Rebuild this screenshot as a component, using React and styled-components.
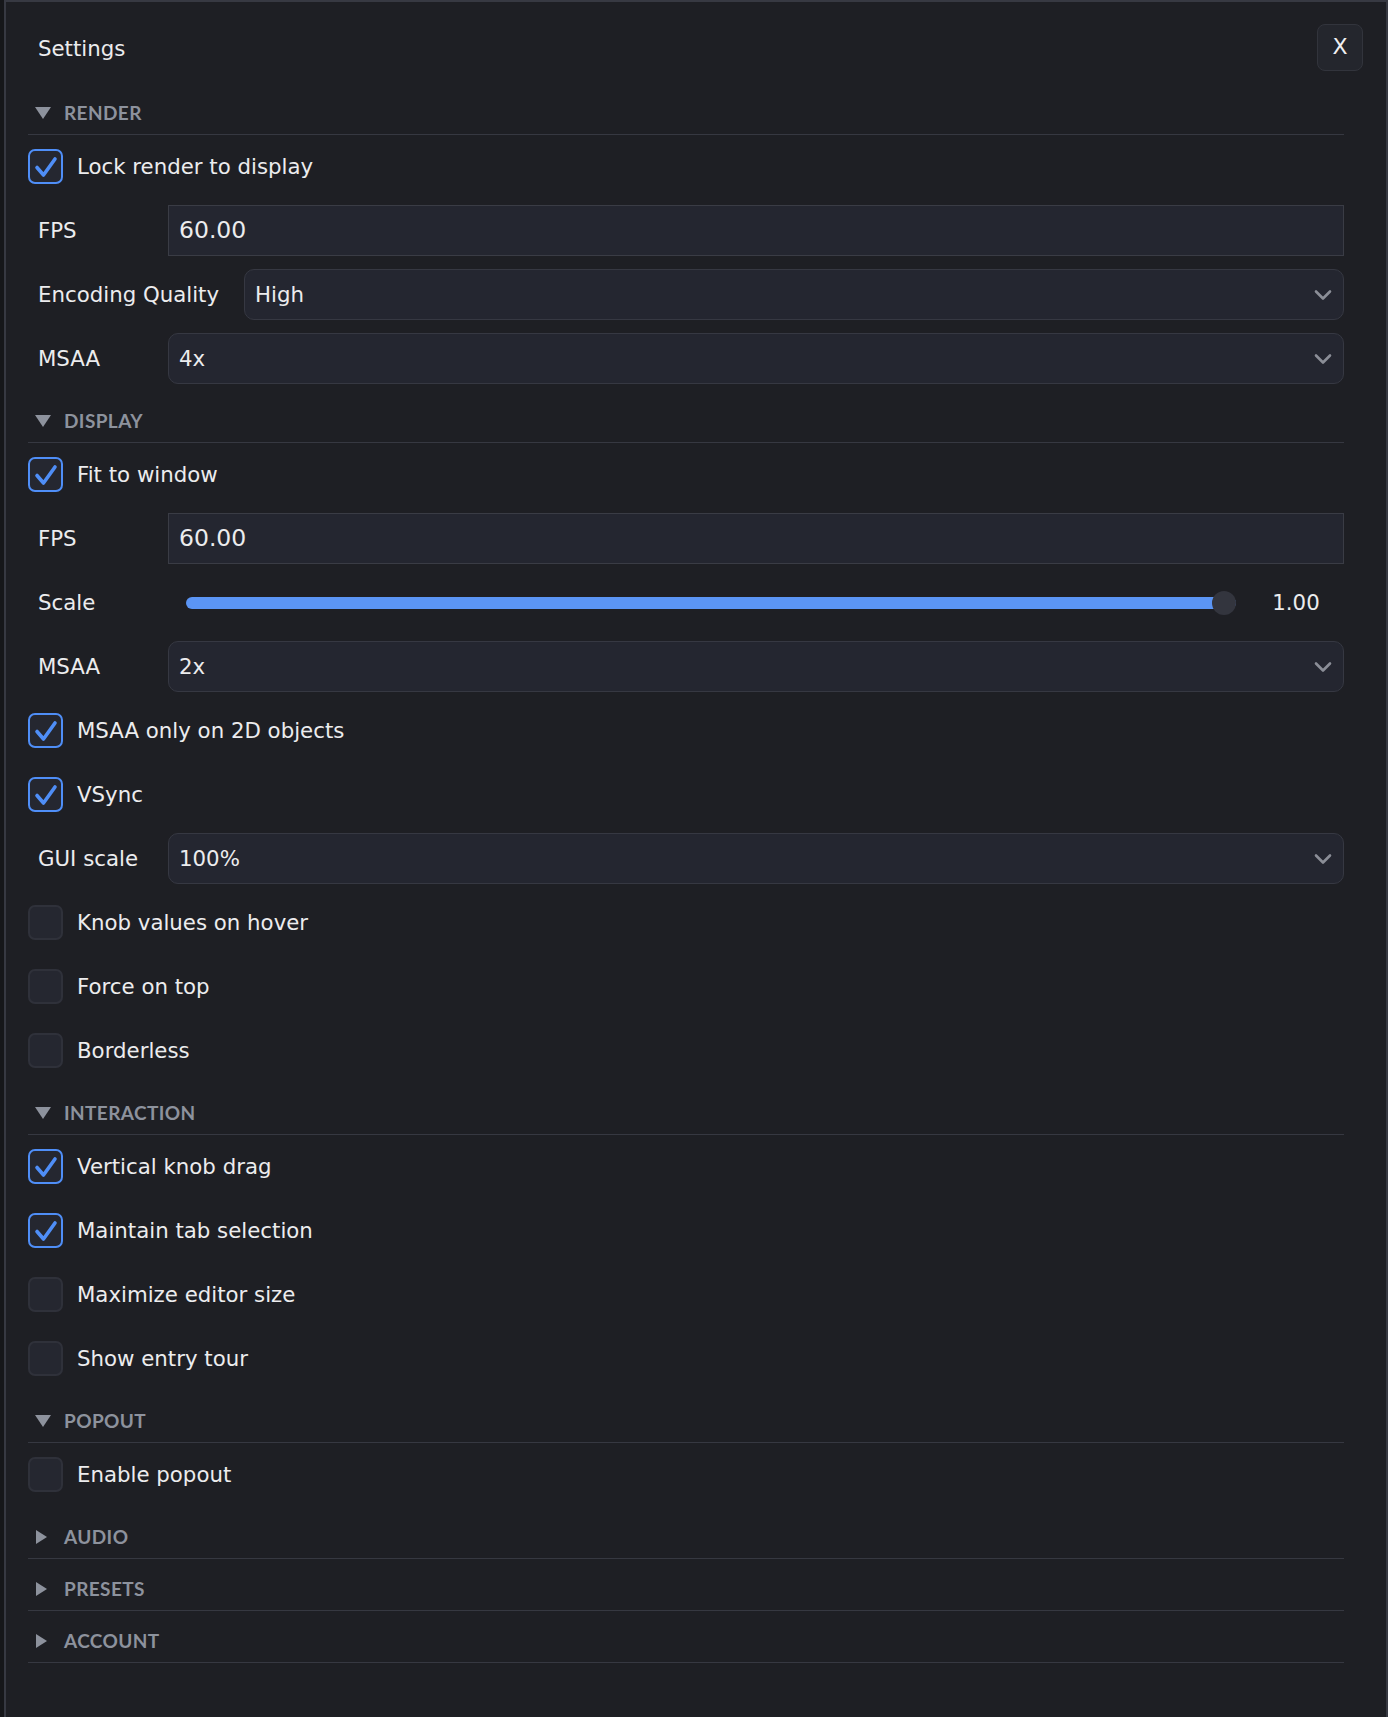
import React from 'react';
import styled, { createGlobalStyle } from 'styled-components';

const GlobalStyle = createGlobalStyle`
  html, body {
    margin: 0;
    padding: 0;
    background: #16171a;
  }
  * {
    box-sizing: border-box;
  }
`;

const Panel = styled.div`
  margin-left: 4px;
  min-height: 1717px;
  background: #1e1f24;
  border: 2px solid #373942;
  border-bottom: none;
  font-family: 'DejaVu Sans', Verdana, sans-serif;
  color: #ececee;
  padding: 22px 23px 0 22px;
`;

const TopBar = styled.div`
  display: flex;
  align-items: center;
  justify-content: space-between;
  margin-bottom: 12px;
`;

const Title = styled.h1`
  margin: 0;
  padding: 2px 0 0 10px;
  font-size: 21.3px;
  font-weight: 400;
  line-height: 28px;
`;

const CloseButton = styled.button`
  width: 46px;
  height: 47px;
  border-radius: 8px;
  border: 1.5px solid #32343c;
  background: #24262d;
  color: #f0f0f2;
  font-family: 'DejaVu Sans', Verdana, sans-serif;
  font-size: 22px;
  line-height: 1;
  display: flex;
  align-items: center;
  justify-content: center;
  padding: 0 0 2px;
`;

const Content = styled.div`
  margin-right: 19px;
`;

const SectionHeader = styled.div`
  display: flex;
  align-items: center;
  gap: 13px;
  padding: 16px 0 7px 7px;
  border-bottom: 1.5px solid #363841;
  font-family: Lato, 'DejaVu Sans', sans-serif;
  font-size: 19px;
  line-height: 28px;
  font-weight: 700;
  letter-spacing: 0.4px;
  color: #8d929d;
`;

const Caret = styled.span`
  width: 16px;
  display: flex;
  align-items: center;
  svg {
    display: block;
  }
`;

const SectionBody = styled.div`
  display: flex;
  flex-direction: column;
  gap: 13px;
  padding: 6px 0 7px;
`;

const Row = styled.div`
  display: flex;
  align-items: center;
  gap: 15px;
  height: 51px;
`;

const Label = styled.span`
  min-width: 125px;
  padding: 0 10px;
  font-size: 21.3px;
  line-height: 28px;
  white-space: nowrap;
`;

const CheckRow = styled.label`
  display: flex;
  align-items: center;
  gap: 14px;
  height: 51px;
  font-size: 21.3px;
  line-height: 28px;
`;

const Box = styled.span`
  width: 35px;
  height: 35px;
  flex: none;
  border-radius: 7px;
  background: #252730;
  border: ${p => (p.checked ? '2.5px solid #4f8ef7' : '2px solid #2f313a')};
  display: flex;
  align-items: center;
  justify-content: center;
`;

const TextInput = styled.div`
  flex: 1;
  height: 51px;
  display: flex;
  align-items: center;
  padding: 0 10px 2px;
  background: #242630;
  border: 1.5px solid #3a3c45;
  font-size: 23.5px;
`;

const Select = styled.div`
  flex: 1;
  height: 51px;
  display: flex;
  align-items: center;
  justify-content: space-between;
  padding: 0 11px 0 10px;
  background: #242630;
  border: 1.5px solid #363842;
  border-radius: 10px;
  font-size: 21.3px;
`;

const SliderWrap = styled.div`
  flex: 1;
  display: flex;
  align-items: center;
  gap: 12px;
  padding-left: 18px;
`;

const Track = styled.div`
  position: relative;
  flex: 1;
  height: 12px;
  border-radius: 6px;
  background: #5b95f5;
`;

const Thumb = styled.span`
  position: absolute;
  right: 0;
  top: 50%;
  width: 24px;
  height: 24px;
  margin-top: -12px;
  border-radius: 50%;
  background: #33353e;
`;

const SliderValue = styled.span`
  width: 96px;
  text-align: center;
  font-size: 21.3px;
`;

const Check = () => (
  <svg width="24" height="22" viewBox="0 0 24 22">
    <path d="M3 11.5 L9.5 19 L21 3" fill="none" stroke="#4f8ef7" strokeWidth="3.6" strokeLinecap="round" strokeLinejoin="round" />
  </svg>
);

const Chevron = () => (
  <svg width="18" height="12" viewBox="0 0 18 12">
    <path d="M2 2.5 L9 9.5 L16 2.5" fill="none" stroke="#8b8e97" strokeWidth="2.6" strokeLinecap="round" strokeLinejoin="round" />
  </svg>
);

const Triangle = ({ open }) =>
  open ? (
    <svg width="16" height="12" viewBox="0 0 16 12">
      <polygon points="0,0 16,0 8,12" fill="#8d929d" />
    </svg>
  ) : (
    <svg width="16" height="14" viewBox="0 0 16 14">
      <polygon points="1,0 12,7 1,14" fill="#8d929d" />
    </svg>
  );

const Checkbox = ({ checked, children }) => (
  <CheckRow>
    <Box checked={checked}>{checked && <Check />}</Box>
    {children}
  </CheckRow>
);

const Field = ({ label, value }) => (
  <Row>
    <Label>{label}</Label>
    <TextInput>{value}</TextInput>
  </Row>
);

const Dropdown = ({ label, value }) => (
  <Row>
    <Label>{label}</Label>
    <Select>
      <span>{value}</span>
      <Chevron />
    </Select>
  </Row>
);

const Slider = ({ label, value }) => (
  <Row>
    <Label>{label}</Label>
    <SliderWrap>
      <Track>
        <Thumb />
      </Track>
      <SliderValue>{value}</SliderValue>
    </SliderWrap>
  </Row>
);

const Section = ({ title, open, children }) => (
  <div>
    <SectionHeader>
      <Caret>
        <Triangle open={open} />
      </Caret>
      {title}
    </SectionHeader>
    {open && <SectionBody>{children}</SectionBody>}
  </div>
);

export default function App() {
  return (
    <>
      <GlobalStyle />
      <Panel>
        <TopBar>
          <Title>Settings</Title>
          <CloseButton>X</CloseButton>
        </TopBar>
        <Content>
          <Section title="RENDER" open>
            <Checkbox checked>Lock render to display</Checkbox>
            <Field label="FPS" value="60.00" />
            <Dropdown label="Encoding Quality" value="High" />
            <Dropdown label="MSAA" value="4x" />
          </Section>
          <Section title="DISPLAY" open>
            <Checkbox checked>Fit to window</Checkbox>
            <Field label="FPS" value="60.00" />
            <Slider label="Scale" value="1.00" />
            <Dropdown label="MSAA" value="2x" />
            <Checkbox checked>MSAA only on 2D objects</Checkbox>
            <Checkbox checked>VSync</Checkbox>
            <Dropdown label="GUI scale" value="100%" />
            <Checkbox>Knob values on hover</Checkbox>
            <Checkbox>Force on top</Checkbox>
            <Checkbox>Borderless</Checkbox>
          </Section>
          <Section title="INTERACTION" open>
            <Checkbox checked>Vertical knob drag</Checkbox>
            <Checkbox checked>Maintain tab selection</Checkbox>
            <Checkbox>Maximize editor size</Checkbox>
            <Checkbox>Show entry tour</Checkbox>
          </Section>
          <Section title="POPOUT" open>
            <Checkbox>Enable popout</Checkbox>
          </Section>
          <Section title="AUDIO" />
          <Section title="PRESETS" />
          <Section title="ACCOUNT" />
        </Content>
      </Panel>
    </>
  );
}
